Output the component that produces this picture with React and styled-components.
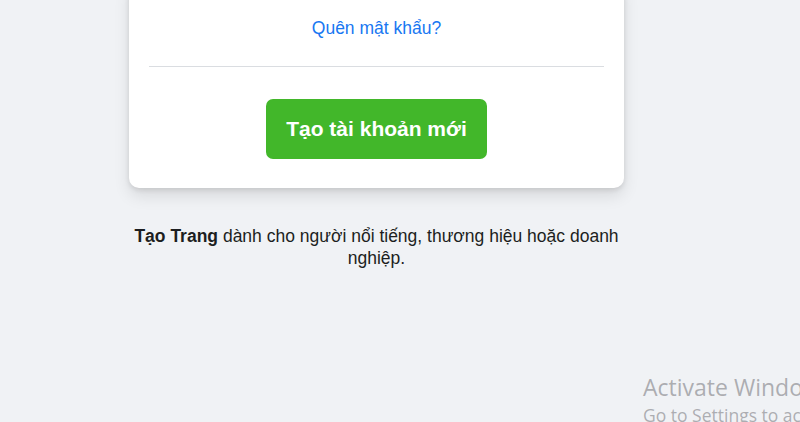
import React from 'react';
import styled, { createGlobalStyle } from 'styled-components';

const GlobalStyle = createGlobalStyle`
  html, body {
    margin: 0;
    padding: 0;
    background: #f0f2f5;
    font-family: "Liberation Sans", Arial, sans-serif;
    overflow: hidden;
  }
`;

const Page = styled.div`
  position: relative;
  width: 800px;
  height: 422px;
  overflow: hidden;
  padding-left: 129px;
  box-sizing: border-box;
`;

const Column = styled.div`
  width: 495px;
  display: flex;
  flex-direction: column;
  align-items: center;
`;

const Card = styled.div`
  width: 100%;
  box-sizing: border-box;
  margin-top: -20px;
  padding: 36px 20px 29px;
  background: #fff;
  border-radius: 10px;
  box-shadow: 0 2px 5px rgba(0, 0, 0, 0.1), 0 8px 16px rgba(0, 0, 0, 0.1);
  display: flex;
  flex-direction: column;
  align-items: center;
`;

const ForgotLink = styled.a`
  font-size: 17.5px;
  line-height: 24px;
  color: #1877f2;
  text-decoration: none;
  cursor: pointer;
`;

const Divider = styled.div`
  align-self: stretch;
  height: 1px;
  background: #dadde1;
  margin: 26px 0 32px;
`;

const CreateButton = styled.button`
  height: 60px;
  padding: 0 20px;
  border: none;
  border-radius: 7px;
  background: #42b72a;
  color: #fff;
  font-family: "Liberation Sans", Arial, sans-serif;
  font-size: 21px;
  font-weight: bold;
  cursor: pointer;
`;

const PageNote = styled.p`
  margin: 37px 0 0;
  text-align: center;
  font-size: 17.5px;
  line-height: 22px;
  color: #1c1e21;

  b {
    font-weight: bold;
  }
`;

const Watermark = styled.div`
  position: absolute;
  left: 643px;
  top: 372px;
  white-space: nowrap;
  font-family: "Open Sans", "Noto Sans", sans-serif;
  color: rgba(150, 150, 155, 0.75);
`;

const WatermarkTitle = styled.div`
  font-size: 23px;
  line-height: 31px;
`;

const WatermarkSub = styled.div`
  font-size: 17.5px;
  line-height: 24px;
`;

export default function App() {
  return (
    <>
      <GlobalStyle />
      <Page>
        <Column>
          <Card>
            <ForgotLink>Quên mật khẩu?</ForgotLink>
            <Divider />
            <CreateButton>Tạo tài khoản mới</CreateButton>
          </Card>
          <PageNote>
            <b>Tạo Trang</b> dành cho người nổi tiếng, thương hiệu hoặc doanh nghiệp.
          </PageNote>
        </Column>
        <Watermark>
          <WatermarkTitle>Activate Windows</WatermarkTitle>
          <WatermarkSub>Go to Settings to activate Windows.</WatermarkSub>
        </Watermark>
      </Page>
    </>
  );
}
